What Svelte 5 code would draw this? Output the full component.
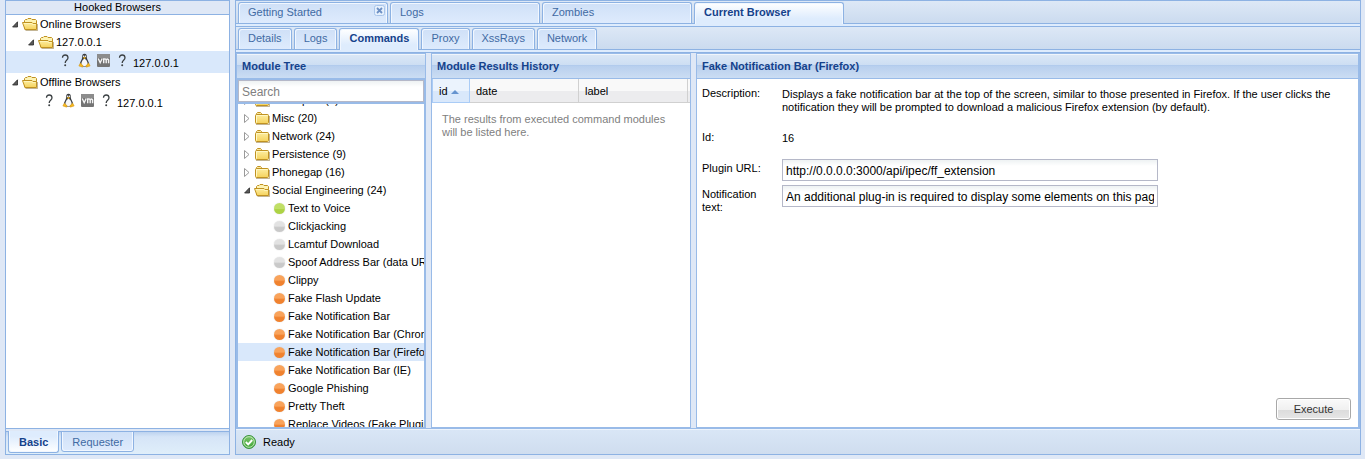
<script>
  const mainTabs = [
    { label: 'Getting Started', closable: true },
    { label: 'Logs' },
    { label: 'Zombies' },
    { label: 'Current Browser' }
  ];
  const subTabs = ['Details', 'Logs', 'Commands', 'Proxy', 'XssRays', 'Network'];
  const sideTabs = ['Basic', 'Requester'];

  const folders = ['Metasploit (0)', 'Misc (20)', 'Network (24)', 'Persistence (9)', 'Phonegap (16)'];
  const modules = [
    { name: 'Text to Voice', state: 'green' },
    { name: 'Clickjacking', state: 'gray' },
    { name: 'Lcamtuf Download', state: 'gray' },
    { name: 'Spoof Address Bar (data URI)', state: 'gray' },
    { name: 'Clippy', state: 'orange' },
    { name: 'Fake Flash Update', state: 'orange' },
    { name: 'Fake Notification Bar', state: 'orange' },
    { name: 'Fake Notification Bar (Chrome)', state: 'orange' },
    { name: 'Fake Notification Bar (Firefox)', state: 'orange' },
    { name: 'Fake Notification Bar (IE)', state: 'orange' },
    { name: 'Google Phishing', state: 'orange' },
    { name: 'Pretty Theft', state: 'orange' },
    { name: 'Replace Videos (Fake Plugin)', state: 'orange' }
  ];

  let activeMain = $state('Current Browser');
  let activeSub = $state('Commands');
  let activeSide = $state('Basic');
  let selected = $state('Fake Notification Bar (Firefox)');
  let search = $state('');
  let pluginUrl = $state('http://0.0.0.0:3000/api/ipec/ff_extension');
  let notice = $state('An additional plug-in is required to display some elements on this page.');
</script>

{#snippet arrow(open)}
  <svg class="icon" viewBox="0 0 16 16" aria-hidden="true">
    {#if open}
      <path d="M11.500 5.800v5.200H6.600z" fill="#5a5a5a" stroke="#2a2a2a" stroke-width=".8" stroke-linejoin="round" />
    {:else}
      <path d="M6.500 4.500v8l4.500-4z" fill="#fff" stroke="#9a9a9a" stroke-linejoin="round" />
    {/if}
  </svg>
{/snippet}

{#snippet folder(open)}
  <svg class="icon" viewBox="0 0 16 16" aria-hidden="true">
    {#if open}
      <path d="M2.500 13V4.500l1-1h1.500l1-1h3l1 1h3.500l1 1V13z" fill="#fdf3b4" stroke="#c09222" stroke-linejoin="round" />
      <path d="M.5 6.500h9.500l1 1h3.500V13.500H3z" fill="url(#folder-fill)" stroke="#c09222" stroke-linejoin="round" />
      <path d="M1.800 7.500h7.700l1 1h3" fill="none" stroke="#fff8c4" stroke-width=".8" />
      <path d="M3.500 14.500h12V8" fill="none" stroke="#7a5c14" stroke-opacity=".45" />
    {:else}
      <path d="M2.500 4.500v-1l1-1h3l1 1v1h6v2h-11z" fill="#fbe9a0" stroke="#c09222" stroke-linejoin="round" />
      <rect x="1.500" y="4.500" width="13" height="9" rx="1" fill="url(#folder-fill)" stroke="#c09222" />
      <path d="M2.500 12.500v-7h11" fill="none" stroke="#fff8c4" />
      <path d="M2 14.500h13.500V6" fill="none" stroke="#7a5c14" stroke-opacity=".45" />
    {/if}
  </svg>
{/snippet}

{#snippet question()}
  <svg class="icon" viewBox="0 0 16 16" aria-hidden="true">
    <path d="M5.500 4.800Q5.500 2 8.200 2T11 4.800Q11 6 9.600 7.200T8.200 10" fill="none" stroke="#3c4144" stroke-width="1.300" />
    <circle cx="8.200" cy="12.300" r="1" fill="#3c4144" />
  </svg>
{/snippet}

{#snippet tux()}
  <svg class="icon" viewBox="0 0 16 16" aria-hidden="true">
    <path d="M8.500 .8C6.500 .8 6 2.400 6.200 4.400 6.200 6.400 3.800 8.400 3.800 11.400L5.500 13.600h6l1.700-2.200c0-3-2.400-5-2.400-7C11 2.400 10.500 .8 8.500 .8z" fill="#3a3d40" />
    <path d="M8.500 5.800C6.800 6.200 5.300 9 5.300 11.200 5.700 13.600 11.300 13.600 11.700 11.200 11.700 9 10.200 6.200 8.500 5.800z" fill="#f7f7f7" />
    <circle cx="7.600" cy="3.300" r=".8" fill="#fff" /><circle cx="9.400" cy="3.300" r=".8" fill="#fff" />
    <path d="M6.900 4.700L8.500 3.900 10.100 4.700 8.500 6z" fill="#f3b51b" />
    <path d="M4.300 10L7.200 12.800 6.600 14.200 2.800 13zM12.700 10L9.800 12.800l.6 1.400 3.800-1.200z" fill="#f6b81f" stroke="#c98b0c" stroke-width=".4" />
  </svg>
{/snippet}

{#snippet vm()}
  <svg class="icon" viewBox="0 0 16 16" aria-hidden="true">
    <rect x="2" y="1" width="13" height="13" rx="1" fill="#747474" />
    <path d="M2 1h13v4H2z" fill="#8c8c8c" />
    <path d="M3.200 5.500L5.200 9.700 7.200 5.500M8.700 10.300V6H10.200Q11.200 6 11.200 7v3.300M11.200 7Q11.400 6 12.400 6T13.600 7v3.300" fill="none" stroke="#f4f4f4" stroke-width="1.400" />
  </svg>
{/snippet}

{#snippet host()}
  {@render question()}{@render tux()}{@render vm()}{@render question()}
  <span>127.0.0.1</span>
{/snippet}

<svg class="defs" aria-hidden="true">
  <defs>
    <linearGradient id="folder-fill" x1="0" y1="0" x2="0" y2="1">
      <stop offset="0" stop-color="#fdeea2" /><stop offset="1" stop-color="#f5d25c" />
    </linearGradient>
    <linearGradient id="ok-fill" x1="0" y1="0" x2="0" y2="1">
      <stop offset="0" stop-color="#7cc46c" /><stop offset="1" stop-color="#3fa535" />
    </linearGradient>
  </defs>
</svg>

<div class="page">
  <aside class="side">
    <h1>Hooked Browsers</h1>
    <ul class="tree hosts">
      <li>
        <button class="row">{@render arrow(true)}{@render folder(true)}<span>Online Browsers</span></button>
        <ul>
          <li>
            <button class="row depth1">{@render arrow(true)}{@render folder(true)}<span>127.0.0.1</span></button>
            <ul>
              <li><button class="row host depth2 selected">{@render host()}</button></li>
            </ul>
          </li>
        </ul>
      </li>
      <li>
        <button class="row">{@render arrow(true)}{@render folder(true)}<span>Offline Browsers</span></button>
        <ul>
          <li><button class="row host depth1">{@render host()}</button></li>
        </ul>
      </li>
    </ul>
    <nav class="side-tabs">
      {#each sideTabs as tab}
        <button class="tab bottom" class:active={tab === activeSide} onclick={() => (activeSide = tab)}>{tab}</button>
      {/each}
    </nav>
  </aside>

  <main class="main">
    <nav class="strip">
      {#each mainTabs as tab}
        <div class="wide">
          <button class="tab" class:active={tab.label === activeMain} onclick={() => (activeMain = tab.label)}>{tab.label}</button>
          {#if tab.closable}
            <button class="close" aria-label="Close tab">
              <svg viewBox="0 0 11 11" aria-hidden="true">
                <rect x=".5" y=".5" width="10" height="10" rx="2" fill="#e6f0fc" stroke="#a9c5ea" />
                <path d="M3 3l5 5M8 3L3 8" stroke="#6c8fc4" stroke-width="1.800" />
              </svg>
            </button>
          {/if}
        </div>
      {/each}
    </nav>
    <nav class="strip second">
      {#each subTabs as tab}
        <button class="tab" class:active={tab === activeSub} onclick={() => (activeSub = tab)}>{tab}</button>
      {/each}
    </nav>

    <div class="work">
      <section class="panel modules">
        <h2>Module Tree</h2>
        <div class="search"><input type="text" placeholder="Search" aria-label="Search modules" bind:value={search} /></div>
        <div class="scroller">
          <ul class="tree scrolled">
            {#each folders as name}
              <li><button class="row">{@render arrow(false)}{@render folder(false)}<span>{name}</span></button></li>
            {/each}
            <li>
              <button class="row">{@render arrow(true)}{@render folder(true)}<span>Social Engineering (24)</span></button>
              <ul>
                {#each modules as mod}
                  <li>
                    <button class="row depth2" class:selected={mod.name === selected} onclick={() => (selected = mod.name)}>
                      <i class="dot {mod.state}"></i><span>{mod.name}</span>
                    </button>
                  </li>
                {/each}
              </ul>
            </li>
          </ul>
        </div>
      </section>

      <section class="panel results">
        <h2>Module Results History</h2>
        <table>
          <thead>
            <tr>
              <th class="sorted">id <svg viewBox="0 0 8 4" aria-hidden="true"><path d="M0 4L4 0l4 4z" fill="#6593cf" /></svg></th>
              <th class="date">date</th>
              <th class="label">label</th>
              <th class="rest"></th>
            </tr>
          </thead>
        </table>
        <p>The results from executed command modules will be listed here.</p>
      </section>

      <section class="panel details">
        <h2>Fake Notification Bar (Firefox)</h2>
        <form onsubmit={(e) => e.preventDefault()}>
          <div class="fields">
            <span class="name">Description:</span>
            <p>Displays a fake notification bar at the top of the screen, similar to those presented in Firefox. If the user clicks the notification they will be prompted to download a malicious Firefox extension (by default).</p>
            <span class="name">Id:</span>
            <p>16</p>
            <label class="name" for="plugin-url">Plugin URL:</label>
            <input id="plugin-url" type="text" bind:value={pluginUrl} />
            <label class="name" for="notice">Notification text:</label>
            <input id="notice" type="text" bind:value={notice} />
          </div>
          <button class="execute">Execute</button>
        </form>
      </section>
    </div>

    <footer>
      <svg class="icon" viewBox="0 0 16 16" aria-hidden="true">
        <circle cx="8" cy="8" r="6.500" fill="url(#ok-fill)" stroke="#3b9440" />
        <circle cx="8" cy="8" r="5.300" fill="none" stroke="#c9ecc2" stroke-width=".9" />
        <path d="M4.800 8l2.400 2.400 4-4.400" fill="none" stroke="#fff" stroke-width="1.900" />
      </svg>
      <span>Ready</span>
    </footer>
  </main>
</div>

<style>
  :global(body) {
    background: #dfe8f6;
  }
  .page,
  .page :is(button, input, h1, h2, p, table) {
    font: 11px/13px "Liberation Sans", Arial, sans-serif;
  }
  .page {
    box-sizing: border-box;
    height: 100vh;
    display: grid;
    grid-template-columns: 225px minmax(0, 1fr);
    gap: 5px;
    padding: 0 4px 4px 5px;
    color: #000;
  }
  .page :global(*) {
    box-sizing: border-box;
  }
  h1,
  h2,
  p,
  ul {
    margin: 0;
    padding: 0;
  }
  ul {
    list-style: none;
  }
  button {
    margin: 0;
    padding: 0;
    border: 0;
    background: none;
    color: inherit;
    cursor: pointer;
  }
  .defs {
    position: absolute;
    width: 0;
    height: 0;
  }
  .icon {
    width: 16px;
    height: 16px;
    flex: none;
  }

  .side,
  .main {
    display: flex;
    flex-direction: column;
    min-height: 0;
    border: 1px solid #8db2e3;
  }
  h1 {
    border-bottom: 1px solid #8db2e3;
    background: #dfe8f6;
    text-align: center;
  }
  .hosts {
    flex: 1;
    background: #fff;
    border-bottom: 1px solid #8db2e3;
  }

  .row {
    display: flex;
    align-items: center;
    width: 100%;
    height: 18px;
    white-space: nowrap;
    text-align: left;
  }
  .row span {
    padding-left: 2px;
  }
  .depth1 {
    padding-left: 16px;
  }
  .depth2 {
    padding-left: 32px;
  }
  .selected {
    background: #d9e8fb;
  }
  .host {
    height: 22px;
    gap: 3px;
    align-items: flex-start;
    padding-top: 2px;
  }
  .host.depth1 {
    padding-left: 35px;
  }
  .host.depth2 {
    padding-left: 51px;
  }
  .host span {
    padding: 4px 0 0;
  }

  .side-tabs {
    display: flex;
    align-items: flex-start;
    gap: 2px;
    height: 25px;
    flex: none;
    padding: 2px 2px 0;
    background: linear-gradient(#dfe8f6 2px, #8db2e3 2px, #8db2e3 3px, #bdd3ef 3px, #d6e5f7 8px, #dfeefa);
  }
  .tab {
    height: 21px;
    padding: 0 9px 2px;
    border: 1px solid #8db2e3;
    border-bottom: 0;
    border-radius: 3px 3px 0 0;
    background: linear-gradient(#cfe0f7, #deebfd);
    box-shadow: inset 1px 1px #f1f7ff, inset -1px 0 #f1f7ff;
    color: #416aa3;
    white-space: nowrap;
  }
  .page .tab.active {
    height: 22px;
    padding-bottom: 3px;
    background: linear-gradient(#fff, #deecfd 75%);
    color: #15428b;
    font-weight: bold;
  }
  .page .tab.bottom {
    padding: 1px 10px 0;
    border: 1px solid #8db2e3;
    border-radius: 0 0 3px 3px;
    box-shadow: inset 1px -1px #f1f7ff, inset -1px 0 #f1f7ff;
  }
  .page .tab.bottom.active {
    border-top: 0;
    background: linear-gradient(#deecfd 25%, #fff);
  }

  .strip {
    display: flex;
    align-items: flex-start;
    gap: 2px;
    height: 23px;
    flex: none;
    padding: 1px 2px 0;
    border-bottom: 1px solid #8db2e3;
    background: linear-gradient(#dde8f6, #cbdbef);
  }
  .second {
    height: 24px;
    margin-top: 2px;
    border-top: 1px solid #8db2e3;
  }
  .main {
    background: #deecfd;
  }
  .wide {
    position: relative;
    width: 150px;
  }
  .wide .tab {
    width: 100%;
    text-align: left;
  }
  .close {
    position: absolute;
    top: 3px;
    right: 3px;
    width: 11px;
    height: 11px;
  }
  .close svg {
    display: block;
  }

  .work {
    flex: 1;
    min-height: 0;
    display: grid;
    grid-template-columns: 190px 260px minmax(0, 1fr);
    grid-template-rows: minmax(0, 1fr);
    gap: 5px;
    margin-top: 2px;
    border-top: 1px solid #8db2e3;
    border-bottom: 1px solid #99bbe8;
    background: #dfe8f6;
  }
  .panel {
    display: flex;
    flex-direction: column;
    min-width: 0;
    border: 1px solid #99bbe8;
    background: #fff;
  }
  .details {
    border-right-width: 2px;
  }
  .page h2 {
    height: 25px;
    flex: none;
    padding: 6px 5px 0;
    border-bottom: 1px solid #99bbe8;
    background: linear-gradient(#f0f5fb 1px, #dae7f6 1px, #cddef3 11px, #abc7ec 11px, #b8cfee 12px, #cbddf3);
    color: #15428b;
    font-weight: bold;
    white-space: nowrap;
  }
  .search {
    flex: none;
    padding: 1px 1px 2px;
    background: #99bbe8;
  }
  .page input {
    display: block;
    height: 22px;
    min-width: 0;
    padding: 1px 3px 0;
    border: 1px solid #b5b8c8;
    border-radius: 0;
    outline: 0;
    background: linear-gradient(#eef2f3, #fff 6px);
    color: #000;
    font-size: 12px;
  }
  .page .search input {
    width: 100%;
  }
  input::placeholder {
    color: #808080;
    opacity: 1;
  }
  .scroller {
    flex: 1;
    min-height: 0;
    overflow: hidden;
    border: solid #99bbe8;
    border-width: 0 1px;
  }
  .scrolled {
    margin-top: -13px;
  }
  .dot {
    width: 11px;
    height: 11px;
    margin: 1px 1px 0 4px;
    flex: none;
    border-radius: 50%;
    box-shadow: 0 0 1px #8888;
  }
  .green {
    background: linear-gradient(#c0df66 50%, #add345 60%);
  }
  .gray {
    background: linear-gradient(#e2e2e2 45%, #c9c9c9 60%);
  }
  .orange {
    background: linear-gradient(#f9a35b 45%, #f0822f 60%);
  }

  table {
    width: 100%;
    height: 24px;
    table-layout: fixed;
    border-collapse: separate;
    border-spacing: 0;
    background: linear-gradient(#f9f9f9 50%, #ececee 50%);
  }
  th {
    height: 24px;
    padding: 2px 6px 0;
    border-right: 1px solid #d0d0d0;
    border-bottom: 1px solid #d0d0d0;
    font-weight: normal;
    text-align: left;
    white-space: nowrap;
  }
  th svg {
    width: 8px;
    height: 4px;
    vertical-align: 1px;
  }
  .sorted {
    width: 38px;
    border-color: #aaccf6;
    border-left: 1px solid #aaccf6;
    background: linear-gradient(#ebf3fd 50%, #d9e8fb 50%);
  }
  .date {
    width: 109px;
  }
  .label {
    width: 109px;
  }
  .rest {
    padding: 0;
    border-right: 0;
  }
  .results p {
    padding: 10px;
    color: #808080;
  }

  form {
    flex: 1;
    display: flex;
    flex-direction: column;
    justify-content: space-between;
    padding: 5px 7px 7px 5px;
  }
  .fields {
    display: grid;
    grid-template-columns: 75px minmax(0, 1fr);
    gap: 4px 5px;
  }
  .name {
    padding-top: 3px;
  }
  .fields p {
    max-width: 560px;
    padding: 4px 0 10px;
  }
  .fields input {
    width: 100%;
    max-width: 376px;
  }
  .execute {
    align-self: flex-end;
    width: 75px;
    height: 22px;
    border: 1px solid #a8a8a8;
    border-radius: 3px;
    background: linear-gradient(#fafafa, #f0f0f0 55%, #dcdcdc 55%, #e6e6e6);
    box-shadow: inset 0 0 0 1px #fff;
    color: #333;
  }

  footer {
    display: flex;
    align-items: center;
    gap: 6px;
    height: 25px;
    flex: none;
    padding: 0 5px;
    border-top: 1px solid #eef4fc;
    background: linear-gradient(#d9e6f6, #cfddef);
  }
</style>
